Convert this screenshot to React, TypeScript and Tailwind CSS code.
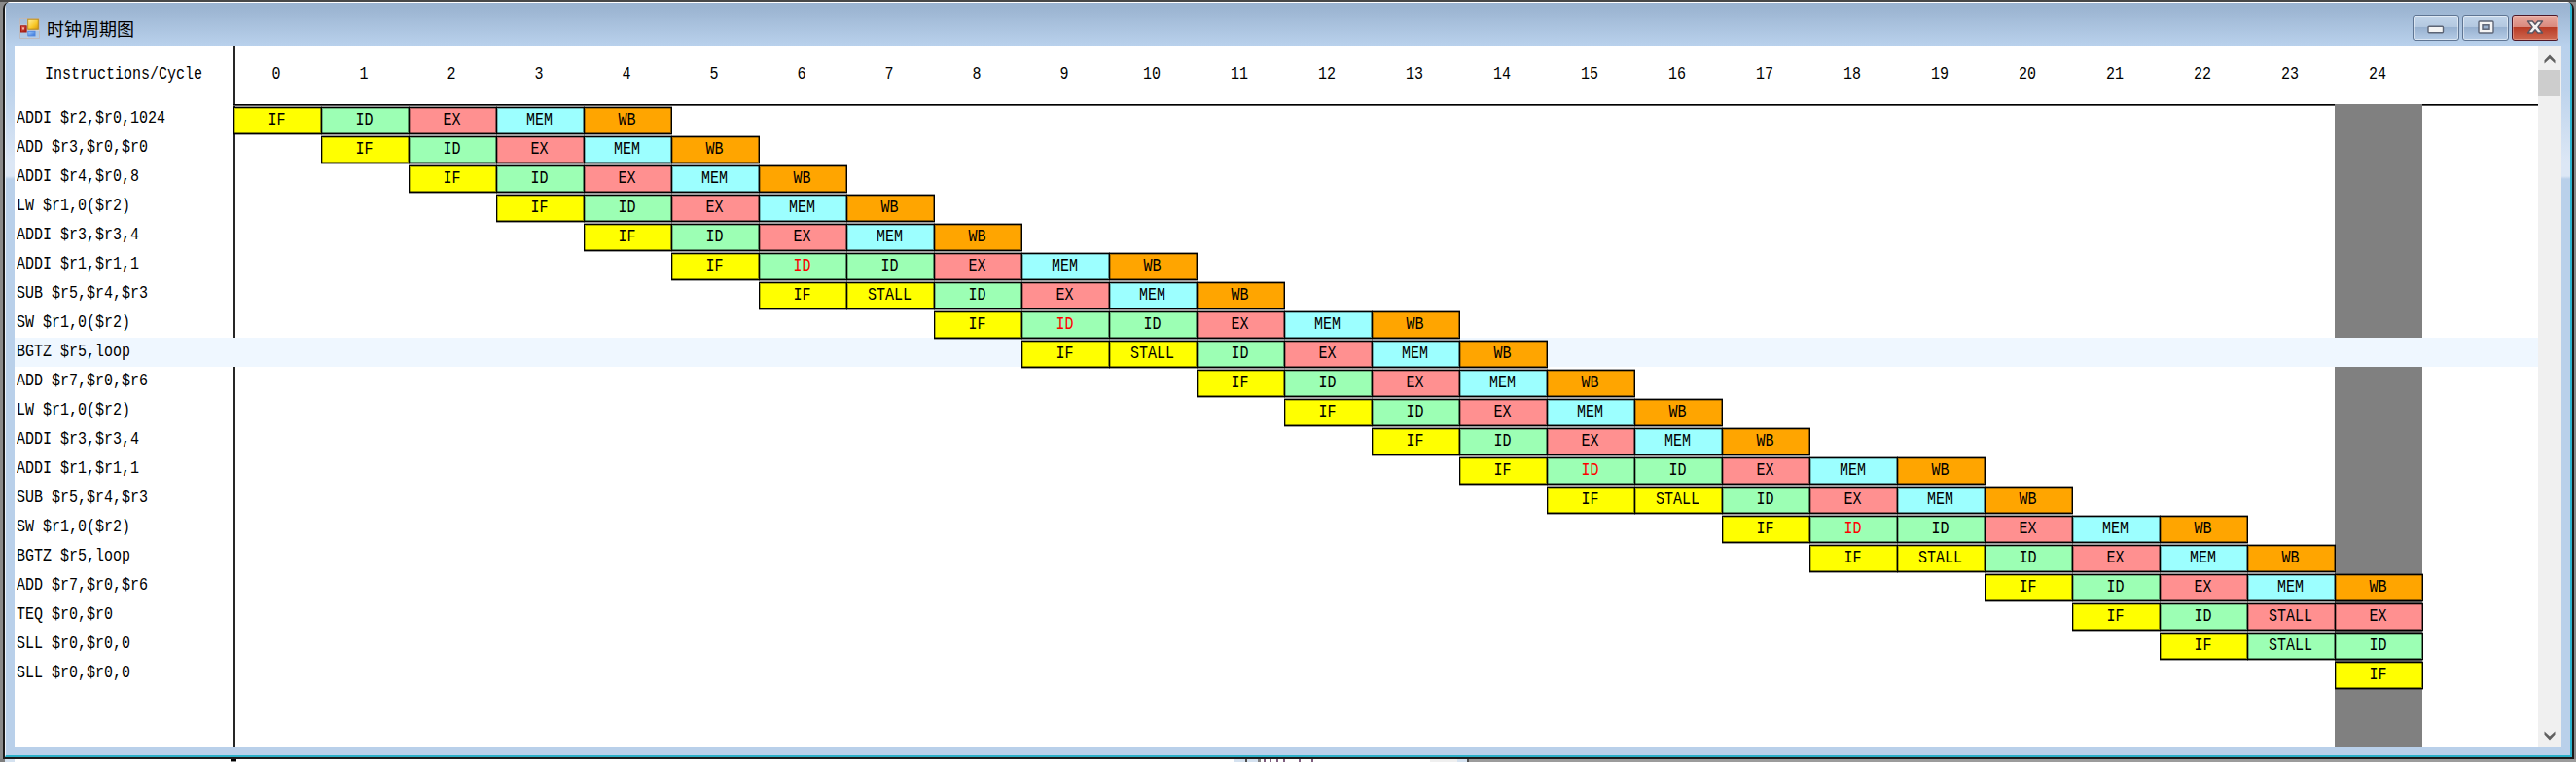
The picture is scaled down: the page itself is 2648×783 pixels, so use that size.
type Tone = 'if' | 'id' | 'ex' | 'mem' | 'wb';

interface Stage {
  label: string;
  tone: Tone;
  hazard?: boolean;
}

interface Row {
  text: string;
  start: number;
  stages: Stage[];
  selected?: boolean;
}

const IF: Stage = { label: 'IF', tone: 'if' };
const ID: Stage = { label: 'ID', tone: 'id' };
const EX: Stage = { label: 'EX', tone: 'ex' };
const MEM: Stage = { label: 'MEM', tone: 'mem' };
const WB: Stage = { label: 'WB', tone: 'wb' };
const ID_HAZARD: Stage = { label: 'ID', tone: 'id', hazard: true };
const stall = (tone: Tone): Stage => ({ label: 'STALL', tone });

const NORMAL = [IF, ID, EX, MEM, WB];
const REPEATED = [IF, ID_HAZARD, ID, EX, MEM, WB];
const STALLED = [IF, stall('if'), ID, EX, MEM, WB];

const rows: Row[] = [
  { text: 'ADDI $r2,$r0,1024', start: 0, stages: NORMAL },
  { text: 'ADD $r3,$r0,$r0', start: 1, stages: NORMAL },
  { text: 'ADDI $r4,$r0,8', start: 2, stages: NORMAL },
  { text: 'LW $r1,0($r2)', start: 3, stages: NORMAL },
  { text: 'ADDI $r3,$r3,4', start: 4, stages: NORMAL },
  { text: 'ADDI $r1,$r1,1', start: 5, stages: REPEATED },
  { text: 'SUB $r5,$r4,$r3', start: 6, stages: STALLED },
  { text: 'SW $r1,0($r2)', start: 8, stages: REPEATED },
  { text: 'BGTZ $r5,loop', start: 9, stages: STALLED, selected: true },
  { text: 'ADD $r7,$r0,$r6', start: 11, stages: NORMAL },
  { text: 'LW $r1,0($r2)', start: 12, stages: NORMAL },
  { text: 'ADDI $r3,$r3,4', start: 13, stages: NORMAL },
  { text: 'ADDI $r1,$r1,1', start: 14, stages: REPEATED },
  { text: 'SUB $r5,$r4,$r3', start: 15, stages: STALLED },
  { text: 'SW $r1,0($r2)', start: 17, stages: REPEATED },
  { text: 'BGTZ $r5,loop', start: 18, stages: STALLED },
  { text: 'ADD $r7,$r0,$r6', start: 20, stages: NORMAL },
  { text: 'TEQ $r0,$r0', start: 21, stages: [IF, ID, stall('ex'), EX] },
  { text: 'SLL $r0,$r0,0', start: 22, stages: [IF, stall('id'), ID] },
  { text: 'SLL $r0,$r0,0', start: 24, stages: [IF] },
];

const cycles = Array.from({ length: 25 }, (_, i) => i);
const CURRENT = 24;

const tones: Record<Tone, string> = {
  if: 'bg-[#ffff00]',
  id: 'bg-[#9cffb4]',
  ex: 'bg-[#ff9090]',
  mem: 'bg-[#9cffff]',
  wb: 'bg-[#ffa500]',
};

function Mono({ children }: { children: React.ReactNode }) {
  return (
    <span className="inline-block scale-y-[1.2] whitespace-pre">
      {children}
    </span>
  );
}

function StageCell({ stage }: { stage: Stage }) {
  return (
    <div
      className={`relative h-[28px] w-[91px] shrink-0 border border-black pr-[2px] text-center leading-[25px] shadow-[0_1px_0_rgba(0,0,0,0.38),0_-1px_0_rgba(0,0,0,0.38),inset_-1px_-1px_0_rgba(0,0,0,0.45),inset_1px_1px_0_rgba(0,0,0,0.3)] ${tones[stage.tone]} ${stage.hazard ? 'text-[#ff0000]' : 'text-black'}`}
    >
      <Mono>{stage.label}</Mono>
    </div>
  );
}

function CycleRow({ row }: { row: Row }) {
  return (
    <div className={`flex h-[30px] shrink-0 ${row.selected ? 'bg-[#eff7ff]' : ''}`}>
      <div
        className={`w-[227px] shrink-0 border-r-2 pl-[2px] leading-[30px] ${row.selected ? 'border-transparent' : 'border-[#262626]'}`}
      >
        <Mono>{row.text}</Mono>
      </div>
      <div className="-ml-[2px] flex">
        {cycles.map((c) => {
          const stage = row.stages[c - row.start];
          return (
            <div
              key={c}
              className={`w-[90px] shrink-0 pt-[3px] ${c === CURRENT && !row.selected ? 'bg-[#808080]' : ''}`}
            >
              {stage && <StageCell stage={stage} />}
            </div>
          );
        })}
      </div>
    </div>
  );
}

function AppIcon() {
  return (
    <svg width="21" height="21" viewBox="0 0 21 21">
      <defs>
        <linearGradient id="gold" x1="0" y1="0" x2="1" y2="1">
          <stop offset="0" stopColor="#fff0a0" />
          <stop offset="0.6" stopColor="#f8c828" />
          <stop offset="1" stopColor="#d89810" />
        </linearGradient>
        <linearGradient id="ruby" x1="0" y1="0" x2="1" y2="1">
          <stop offset="0" stopColor="#e86858" />
          <stop offset="1" stopColor="#981008" />
        </linearGradient>
        <linearGradient id="sky" x1="0" y1="0" x2="1" y2="1">
          <stop offset="0" stopColor="#a8d0ff" />
          <stop offset="1" stopColor="#3070d8" />
        </linearGradient>
      </defs>
      <path d="M.5 .5h20v20H.5z" fill="none" stroke="#bcb9bd" />
      <path d="M.5 7h8M8.5 7v13M8.5 12.5h12" stroke="#d0cdd0" />
      <rect x="8.7" y="1.2" width="10.6" height="10" fill="url(#gold)" stroke="#bd8a17" />
      <rect x="1.5" y="7.8" width="5.6" height="6.2" fill="url(#ruby)" stroke="#a81c14" />
      <rect x="3" y="9.3" width="2" height="2.2" fill="#f8b0a0" />
      <rect x="8.8" y="13.3" width="7.2" height="4.6" fill="url(#sky)" stroke="#5088e0" />
    </svg>
  );
}

function WindowButton({ label, close, children }: { label: string; close?: boolean; children: React.ReactNode }) {
  return (
    <button
      aria-label={label}
      className={`flex h-[27px] w-[48px] items-center justify-center rounded-[3px] border ${
        close
          ? 'border-[#4d1828] shadow-[inset_0_0_0_1px_rgba(255,210,200,0.4)] [background-image:linear-gradient(#e8a99f_0%,#d98a7e_47%,#b83a24_48%,#cf6850_100%)]'
          : 'border-[#5f7593] shadow-[inset_0_0_0_1px_rgba(255,255,255,0.5)] [background-image:linear-gradient(#c2d5ea_0%,#b3c8e0_47%,#96b0cf_48%,#b6cce6_100%)]'
      }`}
    >
      {children}
    </button>
  );
}

function TitleBar() {
  return (
    <header className="flex h-[45px] shrink-0 items-start border-t border-white bg-linear-to-b from-[#9bb4d1] from-10% to-[#b9d1ec] pr-[12px] pl-[14px]">
      <div className="flex pt-[16px]">
        <AppIcon />
        <h1 className="-mt-[1px] ml-[7px] font-['Noto_Sans_CJK_SC',sans-serif] text-[18px] leading-[22px] font-normal text-black">
          时钟周期图
        </h1>
      </div>
      <div className="ml-auto flex gap-[3px] pt-[12px]">
        <WindowButton label="Minimize">
          <svg width="18" height="9" viewBox="0 0 18 9" className="mt-[4px]">
            <rect x="1" y="1.2" width="15.5" height="6.6" rx="1" fill="#f4f4f4" stroke="#5c6475" strokeWidth="1.4" />
          </svg>
        </WindowButton>
        <WindowButton label="Maximize">
          <svg width="17" height="14" viewBox="0 0 17 14" className="-mt-[1px]">
            <rect x="1" y="1" width="15" height="12" rx="1" fill="#f4f4f4" stroke="#5c6475" strokeWidth="1.4" />
            <rect x="5" y="4.8" width="7" height="4.4" fill="#9ab0cc" stroke="#5c6475" strokeWidth="1.5" />
          </svg>
        </WindowButton>
        <WindowButton label="Close" close>
          <svg width="18" height="14" viewBox="0 0 18 14" className="-mt-[1px]">
            <path
              d="M1.5 1h4.8L9 4.2 11.7 1h4.8L11.9 7l4.6 6h-4.8L9 9.8 6.300 13H1.500l4.600-6z"
              fill="#f2f2f2"
              stroke="#5a5662"
              strokeWidth="1.4"
              strokeLinejoin="round"
            />
          </svg>
        </WindowButton>
      </div>
    </header>
  );
}

function Scrollbar() {
  return (
    <div className="flex w-[24px] shrink-0 flex-col items-center bg-[#f0f0f0]">
      <svg width="12" height="10" viewBox="0 0 12 10" className="mt-[9px] mb-[6px] -ml-[1px] shrink-0">
        <path d="M.5 6.2L6 .5l5.500 5.700V9.500L6 4.600.500 9.500z" fill="#606060" />
      </svg>
      <div className="h-[27px] w-[23px] shrink-0 self-start bg-[#cdcdcd]" />
      <svg width="12" height="10" viewBox="0 0 12 10" className="mt-auto mb-[7px] -ml-[1px] shrink-0">
        <path d="M.5 .5L6 5.400l5.500-4.900v3.300L6 9.500.500 3.800z" fill="#606060" />
      </svg>
    </div>
  );
}

function FrameEdge() {
  return (
    <div className="w-[9px] shrink-0 [background-image:linear-gradient(#b9d1ec_0px,#bdd3ec_45px,#dce7f5_120px,#dce7f5_134px,#b9d0ea_137px,#b9d0ea_100%)]" />
  );
}

function Backdrop() {
  return (
    <div className="flex h-[3px] shrink-0">
      <div className="w-[5px] bg-[#7d7d7d]" />
      <div className="w-[10px] bg-[#d5e2f0]" />
      <div className="w-[222px] bg-white" />
      <div className="h-[2px] w-[6px] bg-black" />
      <div className="w-[1026px] bg-white" />
      <div className="w-[11px] bg-[#d5e2f0]" />
      <div className="w-[2px] bg-[#505050]" />
      <div className="w-[11px] bg-[#d5e2f0]" />
      <div className="w-[3px] bg-[#808080]" />
      <div className="flex w-[54px] gap-[5px] bg-white pl-[3px]">
        <div className="w-[2px] bg-[#806080]" />
        <div className="w-[2px] bg-[#806080]" />
        <div className="w-[2px] bg-[#806080]" />
        <div className="mr-[9px] w-[2px] bg-[#806080]" />
        <div className="w-[2px] bg-[#806080]" />
        <div className="w-[2px] bg-[#806080]" />
        <div className="w-[2px] bg-[#806080]" />
      </div>
      <div className="w-[120px] bg-white" />
      <div className="w-[28px] bg-[#efefef]" />
      <div className="w-[10px] bg-[#d5e2f0]" />
      <div className="w-[2px] bg-[#505050]" />
      <div className="flex-1 bg-[#9c9c9c]" />
    </div>
  );
}

export default function App() {
  return (
    <div className="flex h-[783px] w-[2648px] flex-col overflow-hidden bg-[#8a8a8a] font-['Liberation_Mono',monospace] text-[15px] text-black">
      <div className="h-[2px] shrink-0 bg-[#484848]" />
      <div className="flex h-[778px] shrink-0 pr-[2px] pl-[3px]">
        <div className="flex flex-1 flex-col overflow-hidden rounded-t-[7px] border-x-2 border-t-0 border-b-2 border-[#1a1a1a]">
          <div className="flex min-h-0 flex-1 flex-col border-r-2 border-b-2 border-l border-r-[#2cb4ce] border-b-[#2cb0c8] border-l-[#eef4fb]">
            <TitleBar />
            <div className="flex min-h-0 flex-1 bg-[#b9d0ea]">
              <FrameEdge />
              <main className="flex min-w-0 flex-1 overflow-hidden bg-white">
                <div className="flex min-w-0 flex-1 flex-col overflow-hidden">
                  <div className="flex h-[60px] shrink-0">
                    <div className="w-[227px] shrink-0 border-r-2 border-[#262626] pl-[31px] leading-[59px]">
                      <Mono>Instructions/Cycle</Mono>
                    </div>
                    <div className="-ml-[2px] flex">
                      {cycles.map((c) => (
                        <div key={c} className="w-[90px] shrink-0 pr-[2px] text-center leading-[59px]">
                          <Mono>{c}</Mono>
                        </div>
                      ))}
                    </div>
                  </div>
                  <div className="relative -mb-px flex h-px shrink-0 pl-[225px]">
                    <div className="h-px w-[2160px] bg-black shadow-[0_1px_0_#555]" />
                    <div className="w-[90px]" />
                    <div className="h-px w-[119px] bg-black shadow-[0_1px_0_#555]" />
                  </div>
                  {rows.map((row, i) => (
                    <CycleRow key={i} row={row} />
                  ))}
                  <div className="flex flex-1">
                    <div className="w-[227px] border-r-2 border-[#262626]" />
                    <div className="ml-[2158px] w-[90px] bg-[#808080]" />
                  </div>
                </div>
                <Scrollbar />
              </main>
              <FrameEdge />
            </div>
            <div className="h-[8px] shrink-0 bg-[#b9d0ea]" />
          </div>
        </div>
      </div>
      <Backdrop />
    </div>
  );
}
